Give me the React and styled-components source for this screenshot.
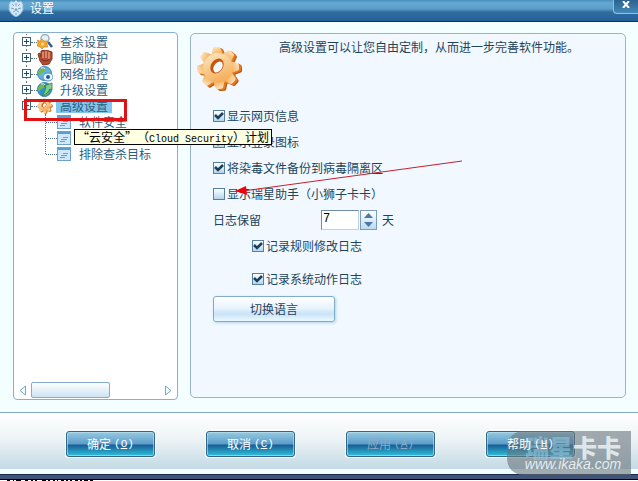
import React, { useState } from 'react';
import styled, { createGlobalStyle } from 'styled-components';

const GlobalStyle = createGlobalStyle`
  * { box-sizing: border-box; }
  body {
    margin: 0;
    background: #fff;
    color: #1f4459;
    font: 12px/16px "Noto Sans CJK SC", sans-serif;
    text-spacing-trim: space-all;
  }
  button, input { font: inherit; color: inherit; }
  ul { list-style: none; margin: 0; padding: 0; }
`;

const groups = [
  { label: '查杀设置', icon: 'scan' },
  { label: '电脑防护', icon: 'glove' },
  { label: '网络监控', icon: 'globe' },
  { label: '升级设置', icon: 'update' },
  {
    label: '高级设置',
    icon: 'gear',
    open: true,
    children: ['软件安全', '“云安全”计划', '排除查杀目标'],
  },
];

const actions = [
  { label: '确定', hotkey: 'O' },
  { label: '取消', hotkey: 'C' },
  { label: '应用', hotkey: 'A', disabled: true },
  { label: '帮助', hotkey: 'H' },
];

function GearIcon({ size }) {
  const teeth = [-4, 41, 86, 131, 176, 221, 266, 311];
  return (
    <svg width={size} height={size} viewBox="0 0 46 46" aria-hidden="true">
      <defs>
        <linearGradient id={`gear${size}`} x1="0" y1="0" x2="0.4" y2="1">
          <stop offset="0" stopColor="#fde9c6" />
          <stop offset="1" stopColor="#f5b05c" />
        </linearGradient>
      </defs>
      {[['#c4560f', 3, 2], ['#e07a20', 2, 1], [`url(#gear${size})`, 0, 0]].map(([color, dx, dy]) => (
        <g key={dx} fill={color} transform={`translate(${21 + dx} ${22 + dy})`}>
          {teeth.map((a) => (
            <path key={a} d="M-6 -12 L-4 -19 Q-4 -21 -2 -21 L2 -21 Q4 -21 4 -19 L6 -12 Z" transform={`rotate(${a})`} />
          ))}
          <circle r="15" />
        </g>
      ))}
      <ellipse cx="20" cy="20" rx="6" ry="8" transform="rotate(35 20 20)" fill="#c4560f" />
      <ellipse cx="21" cy="21" rx="4" ry="6" transform="rotate(35 21 21)" fill="#f4f9fd" />
    </svg>
  );
}

function TreeIcon({ name }) {
  if (name === 'gear') return <GearIcon size={16} />;
  return (
    <svg width="16" height="16" viewBox="0 0 16 16" aria-hidden="true">
      {name === 'scan' && (
        <>
          <path d="M11 8 L15 13" stroke="#315f94" strokeWidth="2.500" />
          <circle cx="8" cy="4.500" r="4" fill="#e3f1f8" stroke="#9aaebb" strokeWidth="1.500" />
          <path d="M5 5 L7 7 L11 7 L10 10 L11 13 L7 13 L5 15 L3 13 L0 12 L1 9 L0 6 L3 7Z" fill="#f5a52c" stroke="#d5821f" strokeWidth=".6" />
          <circle cx="5.500" cy="10" r="1.500" fill="#ffe29b" />
        </>
      )}
      {name === 'glove' && (
        <>
          <path d="M1 4 L3 3 L4 7 L4 1 L7 0 L8 1 L10 0 L12 1 L15 2 L15 9 L12 14 L6 15 L3 11Z" fill="#b84c33" stroke="#873322" />
          <path d="M6 2v6M9 1v7M12 2v7" stroke="#f3c0a4" />
          <path d="M4 9 Q8 13 13 9" stroke="#762c20" fill="none" />
        </>
      )}
      {(name === 'globe' || name === 'update') && (
        <>
          <circle cx="7.500" cy="7.500" r="7" fill={name === 'globe' ? '#62b3df' : '#2e91cd'} stroke="#3683b4" />
          <path d="M3 3 Q7 0 9 3 L7 6 L4 7 L2 10 L1 6Z M8 8 L11 7 L12 11 L8 14Z" fill="#76b849" />
          <path d="M4 2 Q7 1 8 3" stroke="#dff4f6" fill="none" />
        </>
      )}
      {name === 'globe' && (
        <>
          <ellipse cx="11" cy="11" rx="5" ry="4" fill="#e5f4ff" stroke="#5c92bf" />
          <circle cx="11" cy="11" r="2" fill="#245a96" />
        </>
      )}
      {name === 'update' && (
        <path d="M15 1 L15 8 L13 7 Q11 12 5 14 Q8 10 9 5 L7 4Z" fill="#7fd08b" stroke="#217f4b" strokeWidth=".8" />
      )}
    </svg>
  );
}

function PageIcon() {
  return (
    <svg width="14" height="14" viewBox="0 0 14 14" aria-hidden="true">
      <rect x=".5" y=".5" width="13" height="13" fill="#cfe8fb" stroke="#6ba2cb" />
      <path d="M1 2h12" stroke="#5b9fd2" strokeWidth="2" />
      <path d="M6 6.500h5M4 8.500h6M3 10.500h5" stroke="#5fa0d6" />
    </svg>
  );
}

function Shield() {
  return (
    <svg width="16" height="17" viewBox="0 0 16 17" aria-hidden="true">
      <path d="M3 1 L6 2 L8 0 L10 2 L13 1 L15 4 L15 10 Q13 15 8 17 Q3 15 1 10 L1 4Z" fill="#d4e9f5" stroke="#82b3d2" />
      <path d="M4 4l2 2M12 4l-2 2M3 8l3 1M13 8l-3 1M5 12l2-1M11 12l-2-1M8 3v3M7 9h2l-1 2zM8 13v2" stroke="#6fa3c8" fill="#6fa3c8" />
    </svg>
  );
}

function Check({ label, indent, gap, checked }) {
  const [on, setOn] = useState(Boolean(checked));
  return (
    <OptionRow $indent={indent} $gap={gap}>
      <BoxWrap>
        <Box type="checkbox" checked={on} onChange={(e) => setOn(e.target.checked)} />
        {on && (
          <CheckMark width="12" height="12" viewBox="0 0 12 12">
            <path d="M2 5 L5 8 L10 3" fill="none" stroke="#1b3f59" strokeWidth="2.500" />
          </CheckMark>
        )}
      </BoxWrap>
      {label}
    </OptionRow>
  );
}

export default function App() {
  const [days, setDays] = useState(7);

  return (
    <>
      <GlobalStyle />
      <Window>
        <TitleBar>
          <Title><Shield />设置</Title>
          <CloseButton aria-label="关闭">
            <svg width="8" height="7" viewBox="0 0 8 7">
              <path d="M1 0 L7 7 M7 0 L1 7" stroke="#fff" strokeWidth="2" />
            </svg>
          </CloseButton>
        </TitleBar>

        <Content>
          <Sidebar>
            <Tree>
              {groups.map((g) => (
                <li key={g.label}>
                  <TreeRow>
                    <Expander aria-label={g.label}>
                      <svg width="9" height="9" viewBox="0 0 9 9">
                        <rect x=".5" y=".5" width="8" height="8" fill="#fff" stroke="#3f637b" />
                        <path d={g.open ? 'M2 4.500h5' : 'M2 4.500h5M4.500 2v5'} stroke="#24475f" />
                      </svg>
                    </Expander>
                    <Dots />
                    <TreeIcon name={g.icon} />
                    <TreeLabel $selected={g.open}>{g.label}</TreeLabel>
                  </TreeRow>
                  {g.children && (
                    <SubTree>
                      {g.children.map((c) => (
                        <SubRow key={c}><SubDots /><PageIcon />{c}</SubRow>
                      ))}
                    </SubTree>
                  )}
                </li>
              ))}
              <RedFrame />
              <Tip role="tooltip">“云安全”（<Latin>Cloud Security</Latin>）计划</Tip>
            </Tree>
            <ScrollBar>
              <ScrollArrow aria-label="向左">
                <svg width="8" height="11" viewBox="0 0 8 11"><path d="M6.500 1v9L1 5.500Z" fill="#f4faff" stroke="#7fa6c2" /></svg>
              </ScrollArrow>
              <Thumb />
              <ScrollArrow aria-label="向右">
                <svg width="8" height="11" viewBox="0 0 8 11"><path d="M1.500 1v9L7 5.500Z" fill="#f4faff" stroke="#7fa6c2" /></svg>
              </ScrollArrow>
            </ScrollBar>
          </Sidebar>

          <Panel>
            <Intro>
              <GearIcon size={46} />
              <IntroText>高级设置可以让您自由定制，从而进一步完善软件功能。</IntroText>
            </Intro>
            <Options>
              <Check label="显示网页信息" checked />
              <Check label="显示登录图标" checked />
              <Check label="将染毒文件备份到病毒隔离区" checked />
              <Check label="显示瑞星助手（小狮子卡卡）" />
              <DaysRow>
                <DaysLabel htmlFor="days">日志保留</DaysLabel>
                <DaysInput id="days" value={days} onChange={(e) => setDays(Number(e.target.value) || 0)} />
                <Spinner>
                  <SpinButton aria-label="增加" onClick={() => setDays(days + 1)}>
                    <svg width="9" height="5" viewBox="0 0 9 5"><path d="M4.500 0L9 5H0Z" fill="#4c78a2" /></svg>
                  </SpinButton>
                  <SpinButton aria-label="减少" onClick={() => setDays(Math.max(0, days - 1))}>
                    <svg width="9" height="5" viewBox="0 0 9 5"><path d="M0 0H9L4.500 5Z" fill="#4c78a2" /></svg>
                  </SpinButton>
                </Spinner>
                天
              </DaysRow>
              <Check label="记录规则修改日志" indent checked />
              <Check label="记录系统动作日志" indent gap checked />
              <LanguageButton>切换语言</LanguageButton>
            </Options>
          </Panel>
        </Content>

        <Footer>
          {actions.map((a) => (
            <ActionButton key={a.label} disabled={a.disabled}>
              <ActionLabel>
                {a.label}
                <Hotkey>(<u>{a.hotkey}</u>)</Hotkey>
              </ActionLabel>
            </ActionButton>
          ))}
        </Footer>
        <BottomEdge />

        <Pointer width="228" height="36" viewBox="0 0 228 36" aria-hidden="true">
          <path d="M227 1 L8 31" stroke="#c8202a" />
          <path d="M0 31 L11 26 L12 35Z" fill="#f00008" />
        </Pointer>
        <Watermark>
          <Brand><Faded>瑞星</Faded>卡卡</Brand>
          <Site>www.ikaka.com</Site>
        </Watermark>
      </Window>
      <Remnant width="94" height="2" viewBox="0 0 94 2" aria-hidden="true">
        <path d="M7 1h3m3 0h1m2 0h5m4 0h3m3 0h2m2 0h2m5 0h4m2 0h2m3 0h2m2 0h1m3 0h3m2 0h2m2 0h2m3 0h3m2 0h2m2 0h4m2 0h3" stroke="#000" strokeWidth="2" />
      </Remnant>
    </>
  );
}

const Window = styled.main`
  position: relative;
  display: flex;
  flex-direction: column;
  min-height: calc(100vh - 2px);
  background: #f3feff;
`;

const TitleBar = styled.header`
  display: flex;
  justify-content: space-between;
  align-items: flex-start;
  height: 22px;
  padding-left: 8px;
  border-bottom: 1px solid #0f3657;
  background: linear-gradient(#4990bf 0, #66aad2 3px, #5a9dca 9px, #316c9d 12px, #23609a 100%);
`;

const Title = styled.div`
  display: flex;
  gap: 6px;
  color: #fff;
`;

const CloseButton = styled.button`
  display: flex;
  justify-content: center;
  width: 25px;
  height: 14px;
  padding: 1px 0 0;
  border: solid #8fc0de;
  border-width: 0 0 1px 1px;
  border-radius: 0 0 0 4px;
  background: linear-gradient(#2b628f, #4389b8);
`;

const Content = styled.div`
  display: flex;
  flex: 1;
  gap: 12px;
  padding: 10px 12px 12px 13px;
`;

const Sidebar = styled.nav`
  display: flex;
  flex-direction: column;
  justify-content: space-between;
  width: 165px;
  border: 1px solid #8aafcc;
  border-radius: 4px;
  background: #fff;
`;

const Tree = styled.ul`
  position: relative;
  padding: 1px 0 0 8px;
  color: #2b5d80;
`;

const TreeRow = styled.div`
  display: flex;
  align-items: center;
  height: 16px;
`;

const Expander = styled.button`
  display: flex;
  padding: 3px 0 4px;
  border: 0;
  background: repeating-linear-gradient(#53758c 0 1px, transparent 1px 3px) center / 1px 100% no-repeat;
`;

const Dots = styled.span`
  width: 6px;
  border-top: 1px dotted #53758c;
`;

const TreeLabel = styled.span`
  height: 14px;
  margin-left: 3px;
  padding: 0 4px;
  line-height: 14px;
  background: ${(props) => (props.$selected ? '#83c5ec' : 'transparent')};
`;

const SubTree = styled.ul`
  height: 40px;
  margin-left: 23px;
  border-left: 1px dotted #53758c;
`;

const SubRow = styled.li`
  display: flex;
  align-items: center;
  height: 16px;
  white-space: nowrap;

  svg { margin-right: 8px; }
`;

const SubDots = styled(Dots)`
  width: 11px;
`;

const RedFrame = styled.li`
  position: absolute;
  top: 66px;
  left: 10px;
  width: 103px;
  height: 22px;
  border: 3px solid #e31114;
`;

const Tip = styled.li`
  position: absolute;
  top: 96px;
  left: 60px;
  z-index: 2;
  height: 16px;
  padding: 0 2px;
  border: 1px solid #000;
  background: #ffffe1;
  color: #000;
  line-height: 14px;
  white-space: nowrap;
`;

const Latin = styled.span`
  font-family: "Liberation Mono", monospace;
  font-size: 10px;
`;

const ScrollBar = styled.div`
  display: flex;
  align-items: center;
  height: 18px;
  padding: 0 5px;
`;

const ScrollArrow = styled.button`
  display: flex;
  padding: 0;
  border: 0;
  background: none;

  &:last-child { margin-left: auto; }
`;

const Thumb = styled.div`
  width: 79px;
  height: 16px;
  margin-left: 4px;
  border: 1px solid #86acd0;
  border-radius: 2px;
  background: linear-gradient(#fff, #cde3f3);
`;

const Panel = styled.section`
  flex: 1;
  margin: 1px 0 2px;
  padding: 0 22px;
  border: 1px solid #98b4c6;
  border-radius: 5px;
  background: #f1f8ff;
`;

const Intro = styled.div`
  display: flex;
  gap: 36px;
  height: 69px;
  margin-left: -16px;
  padding-top: 12px;

  svg { flex: none; }
`;

const IntroText = styled.p`
  margin: -7px 0 0;
`;

const Options = styled.form.attrs({ onSubmit: (e) => e.preventDefault() })`
  display: flex;
  flex-direction: column;
  align-items: flex-start;
`;

const OptionRow = styled.label`
  display: flex;
  align-items: center;
  gap: 2px;
  height: 26px;
  margin-top: ${(props) => (props.$gap ? '7px' : '0')};
  margin-left: ${(props) => (props.$indent ? '39px' : '0')};
`;

const BoxWrap = styled.span`
  position: relative;
  display: flex;
`;

const Box = styled.input`
  appearance: none;
  width: 12px;
  height: 12px;
  margin: 0;
  border: 1px solid #567fa3;
  background: linear-gradient(#fff, #b4d5ee);
`;

const CheckMark = styled.svg`
  position: absolute;
  inset: 0;
  pointer-events: none;
`;

const DaysRow = styled.div`
  display: flex;
  align-items: center;
  height: 26px;
`;

const DaysLabel = styled.label`
  width: 108px;
`;

const DaysInput = styled.input`
  width: 38px;
  height: 20px;
  padding: 0 1px 2px;
  border: 1px solid #c3d1dc;
  border-top-color: #6f8ca3;
  border-left-color: #6f8ca3;
  background: #fff;
  color: #000;
  font: 12px "Liberation Mono", monospace;
`;

const Spinner = styled.div`
  display: flex;
  flex-direction: column;
  width: 17px;
  height: 20px;
  margin: 0 5px 0 1px;
  border: 1px solid #789dbe;
  background: linear-gradient(#fff, #bddaf0);
`;

const SpinButton = styled.button`
  display: flex;
  flex: 1;
  align-items: center;
  justify-content: center;
  padding: 0;
  border: 0;
  background: none;
`;

const LanguageButton = styled.button`
  width: 122px;
  height: 26px;
  margin-top: 4px;
  padding: 0;
  border: 1px solid #82acc8;
  border-radius: 3px;
  background: linear-gradient(#fff, #e9f4fd 45%, #c9e3f8 70%, #edf9ff);
  box-shadow: 1px 1px 3px #a9d4ee;
`;

const Footer = styled.footer`
  display: flex;
  gap: 51px;
  height: 57px;
  padding: 18px 63px 0 66px;
  border-top: 1px solid #86a9c5;
  background: linear-gradient(#fff, #eef4f6 45%, #c3dae5);
`;

const ActionButton = styled.button`
  flex: 0 0 89px;
  height: 26px;
  padding: 0;
  border: 1px solid #2e6788;
  border-radius: 3px;
  background: linear-gradient(#98c9df, #5b9dcc 50%, #1a5b93 54%, #2ec3dc);
  box-shadow: 0 0 0 1px #fff, inset 0 0 0 1px rgba(190, 230, 242, 0.6);
  color: #fff;

  &:disabled { color: #8ba9c6; }
`;

const ActionLabel = styled.span`
  position: relative;
  z-index: 1;
  display: flex;
  align-items: center;
  justify-content: center;
  gap: 3px;
`;

const Hotkey = styled.span`
  font: 11px/14px "Liberation Mono", monospace;
`;

const BottomEdge = styled.div`
  height: 10px;
  border: solid #3e547b;
  border-width: 0 0 4px;
  box-shadow: inset 0 -1px #17294a, 0 1px #000;
`;

const Pointer = styled.svg`
  position: absolute;
  top: 160px;
  left: 235px;
  pointer-events: none;
`;

const Watermark = styled.div`
  position: absolute;
  right: 7px;
  bottom: 4px;
  width: 124px;
  height: 44px;
  padding: 6px 9px 0 17px;
  border-radius: 16px 0 0 16px;
  background: rgba(105, 117, 124, 0.6);
  color: #e5ebee;
  text-align: center;
  white-space: nowrap;
  pointer-events: none;
`;

const Brand = styled.div`
  font-size: 24px;
  font-weight: 900;
  line-height: 20px;
  color: rgba(230, 240, 245, 0.9);
`;

const Faded = styled.span`
  color: rgba(140, 200, 228, 0.6);
`;

const Site = styled.div`
  font: italic 14px/14px "Liberation Sans", sans-serif;
`;

const Remnant = styled.svg`
  display: block;
`;
